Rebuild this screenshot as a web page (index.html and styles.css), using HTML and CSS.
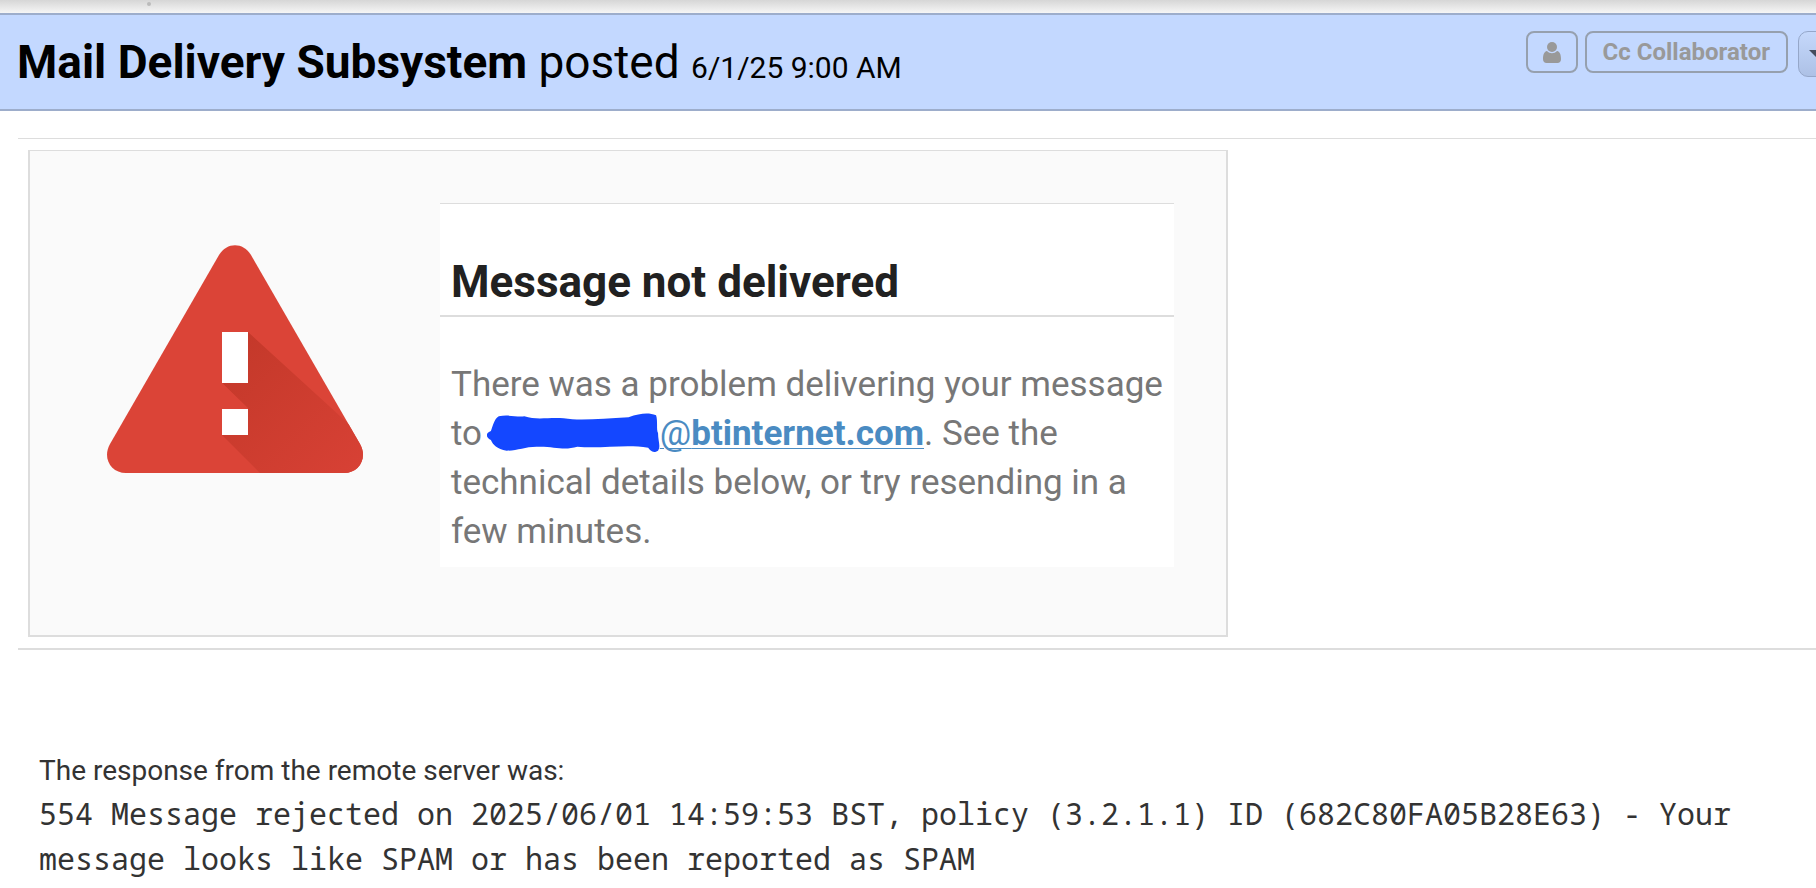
FILE: index.html
```html
<!DOCTYPE html>
<html lang="en">
<head>
    <meta charset="UTF-8">
    <meta name="viewport" content="width=device-width, initial-scale=1.0">
    <title>Mail Delivery Subsystem</title>
    <link rel="stylesheet" href="styles.css">
</head>
<body>
    <div class="top-strip"><span class="speck"></span></div>

    <header class="post-header">
        <h1><strong>Mail Delivery Subsystem</strong> posted <time datetime="2025-06-01T09:00">6/1/25 9:00 AM</time></h1>
        <div class="actions">
            <button type="button" class="tag user" aria-label="User">
                <svg viewBox="0 0 18 21" width="18" height="21">
                    <ellipse cx="9" cy="5" rx="5" ry="5"/>
                    <path d="M4 9C1 9.500 0 13 0 17C0 19.500 1.500 21 3.500 21H14.500C16.500 21 18 19.500 18 17C18 13 17 9.500 14 9C12.500 10.500 11 11.200 9 11.200C7 11.200 5.500 10.500 4 9Z"/>
                </svg>
            </button>
            <button type="button" class="tag">Cc Collaborator</button>
            <button type="button" class="more" aria-label="More">
                <svg viewBox="0 0 16 8" width="16" height="8"><path d="M0 0H16L8 8Z"/></svg>
            </button>
        </div>
    </header>

    <main>
        <section class="notice-row">
            <div class="notice">
                <svg class="warning" viewBox="0 0 258 228" width="258" height="228">
                    <defs>
                        <linearGradient id="shade" x1="0" y1="0" x2="1" y2="1">
                            <stop offset="0" stop-color="#c23829"/>
                            <stop offset="1" stop-color="#d84135"/>
                        </linearGradient>
                        <clipPath id="triangle">
                            <path d="M113 10C121 -3 137 -3 145 10L254 199C262 213 253 228 238 228H20C5 228 -4 213 4 199Z"/>
                        </clipPath>
                    </defs>
                    <g clip-path="url(#triangle)">
                        <path fill="#db4437" d="M0 0H258V228H0Z"/>
                        <path fill="url(#shade)" d="M142 87L258 193V228H154L116 190L142 164L116 138Z"/>
                    </g>
                    <path fill="#db4437" d="M116 138L142 163V164H116Z"/>
                    <path fill="#fff" d="M116 87H142V138H116ZM116 164H142V190H116Z"/>
                </svg>
                <div class="notice-text">
                    <h2>Message not delivered</h2>
                    <p>There was a problem delivering your message to <a href="#"><svg class="scribble" viewBox="0 0 176 40" width="173" height="40">
                        <path d="M12 3C22 1 30 4 38 3C50 7 62 4 78 5C96 8 118 5 144 4C156 0 164 -1 172 2C174 8 172 16 174 20C174 28 177 34 174 38C169 41 166 38 164 35C142 31 118 36 92 34C78 38 70 34 54 34C40 33 32 38 20 38C10 36 6 32 4 27C-1 25 -2 20 4 18C6 13 7 6 12 3Z"/>
                    </svg><span class="at">@</span>btinternet.com</a>. See the technical details below, or try resending in a few minutes.</p>
                </div>
            </div>
        </section>

        <section class="response">
            <p>The response from the remote server was:</p>
            <p class="code">554 Message rejected on 2025/06/01 14:59:53 BST, policy (3.2.1.1) ID (682C80FA05B28E63) - Your message looks like SPAM or has been reported as SPAM</p>
        </section>
    </main>
</body>
</html>
```
FILE: styles.css
```css
* {
    box-sizing: border-box;
}

body {
    margin: 0;
    background-color: #fff;
    color: #333;
    font-family: Roboto, sans-serif;
    overflow-x: hidden;
}

h1, h2, p {
    margin: 0;
}

.top-strip {
    position: relative;
    height: 13px;
    background: linear-gradient(#d6d6d6, #f6f6f6);
}

.speck {
    position: absolute;
    top: 2px;
    left: 147px;
    width: 4px;
    height: 4px;
    border-radius: 50%;
    background-color: #bbb;
}

.post-header {
    display: flex;
    justify-content: space-between;
    align-items: flex-start;
    height: 98px;
    padding-left: 17px;
    overflow: hidden;
    background-color: #c3d8ff;
    border-top: 2px solid #9dadcb;
    border-bottom: 2px solid #9dadcb;
}

.post-header h1 {
    padding-top: 20px;
    color: #000;
    font-size: 46px;
    font-weight: 400;
    line-height: 54px;
    white-space: nowrap;
}

.post-header time {
    font-size: 30px;
}

.actions {
    display: flex;
    align-items: flex-start;
    gap: 7px;
    padding-top: 16px;
    margin-right: -32px;
}

.tag {
    height: 42px;
    padding: 0 16px;
    border: 2px solid #96a0ae;
    border-radius: 8px;
    background: none;
    color: #999;
    font-family: inherit;
    font-size: 24px;
    font-weight: 700;
    line-height: 36px;
}

.user {
    padding: 0 15px;
}

.tag svg {
    display: block;
    fill: #999;
}

.more {
    width: 50px;
    height: 46px;
    margin-left: 3px;
    padding: 0 10px;
    border: 1px solid #95a7c9;
    border-radius: 10px;
    background: linear-gradient(#c5d8fb, #adc1e6);
}

.more svg {
    display: block;
    fill: #444d5e;
}

main {
    padding-left: 18px;
}

.notice-row {
    margin-top: 27px;
    padding: 11px 10px;
    border-top: 1px solid #ddd;
    border-bottom: 2px solid #ddd;
}

.notice {
    display: flex;
    align-items: flex-start;
    width: 100%;
    max-width: 1200px;
    padding: 52px 52px 68px 76px;
    background-color: #fafafa;
    border: 2px solid #ddd;
    border-top-width: 1px;
}

.warning {
    flex: none;
    margin: 42px 76px 0 0;
}

.notice-text {
    flex: 1;
    background-color: #fff;
    border-top: 1px solid #ddd;
}

.notice-text h2 {
    padding: 52px 11px 7px;
    border-bottom: 2px solid #ddd;
    color: #212121;
    font-size: 44px;
    line-height: 52px;
}

.notice-text p {
    padding: 43px 11px 11px;
    color: #777;
    font-size: 35px;
    line-height: 49px;
}

.notice-text a {
    color: #4a8bc2;
    font-weight: 700;
    text-decoration-thickness: 1px;
    text-underline-offset: 3px;
}

.at {
    font-weight: 400;
}

.scribble {
    vertical-align: -8px;
    margin-left: -4px;
    fill: #1447ff;
}

.response {
    padding: 100px 22px 0 21px;
}

.response p {
    font-size: 28px;
    line-height: 41px;
}

.response .code {
    font-family: "Noto Sans Mono", "DejaVu Sans Mono", monospace;
    font-size: 30px;
    line-height: 45px;
}
```
